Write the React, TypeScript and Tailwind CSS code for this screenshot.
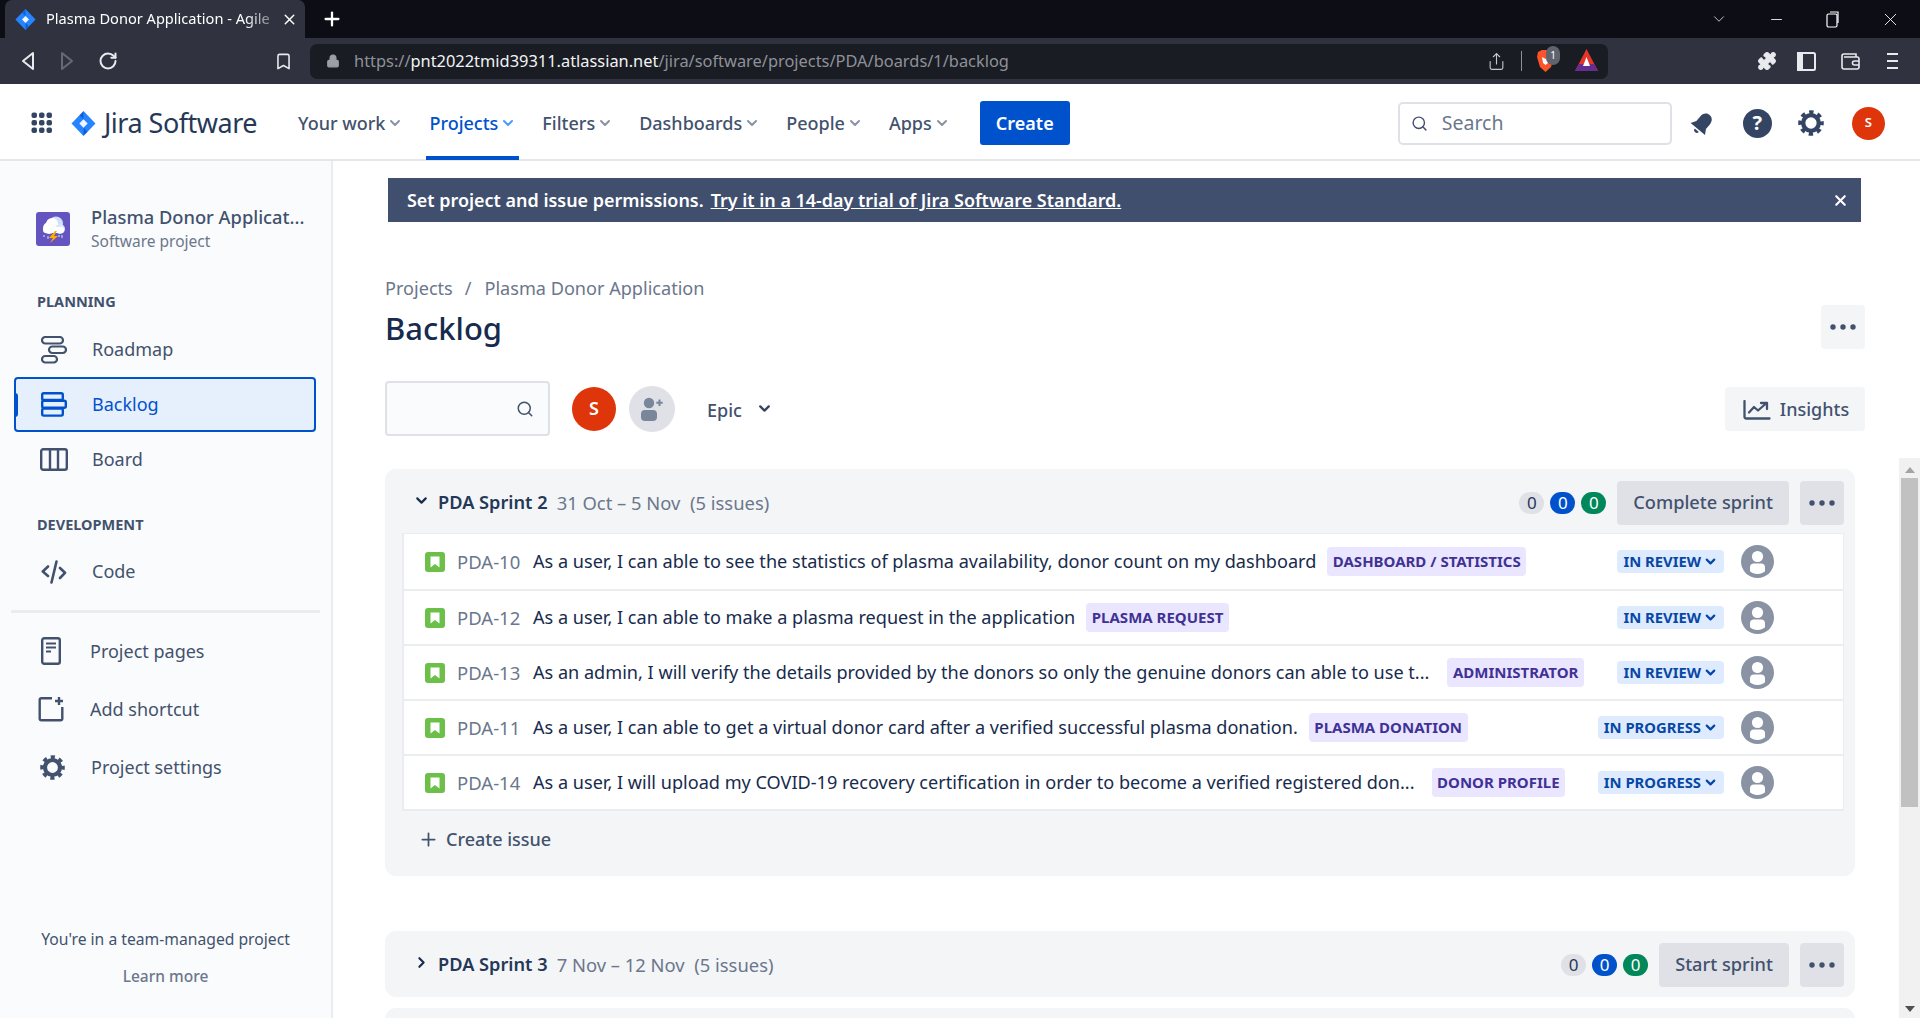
import { Puzzle, Search, ChevronDown, ChevronRight, Plus, X, Lock, RotateCw, Bookmark, Share, Minus } from "lucide-react";

const issues = [
  { key: "PDA-10", text: "As a user, I can able to see the statistics of plasma availability, donor count on my dashboard", label: "DASHBOARD / STATISTICS", status: "IN REVIEW", labelGap: "ml-[11px]" },
  { key: "PDA-12", text: "As a user, I can able to make a plasma request in the application", label: "PLASMA REQUEST", status: "IN REVIEW", labelGap: "ml-[11px]" },
  { key: "PDA-13", text: "As an admin, I will verify the details provided by the donors so only the genuine donors can able to use t...", label: "ADMINISTRATOR", status: "IN REVIEW", labelGap: "ml-[18px]" },
  { key: "PDA-11", text: "As a user, I can able to get a virtual donor card after a verified successful plasma donation.", label: "PLASMA DONATION", status: "IN PROGRESS", labelGap: "ml-[11px]" },
  { key: "PDA-14", text: "As a user, I will upload my COVID-19 recovery certification in order to become a verified registered don...", label: "DONOR PROFILE", status: "IN PROGRESS", labelGap: "ml-[17px]" },
];

const navItems = ["Your work", "Projects", "Filters", "Dashboards", "People", "Apps"];

function JiraMark({ size }: { size: number }) {
  return (
    <svg width={size} height={size} viewBox="0 0 24 24" className="shrink-0">
      <path d="M12 0 L23.5 12 L12 24 L0.5 12 Z" fill="#2684ff" />
      <path d="M12 8 L16 12 L12 16 L8 12 Z" fill="#f2f7ff" />
      <path d="M12 8 L8.2 4.2 L12 0.4 Z" fill="#0f5fd6" />
      <path d="M12 16 L15.8 19.8 L12 23.6 Z" fill="#0f5fd6" />
    </svg>
  );
}

function Gear({ size, color }: { size: number; color: string }) {
  return (
    <svg width={size} height={size} viewBox="0 0 24 24" className="shrink-0">
      <circle cx="12" cy="12" r="7.2" fill="none" stroke={color} strokeWidth="4" />
      <circle cx="12" cy="12" r="10" fill="none" stroke={color} strokeWidth="3.6" strokeDasharray="4 3.854" strokeDashoffset="2" />
    </svg>
  );
}

function Dots() {
  return (
    <svg width="26" height="6" viewBox="0 0 26 6">
      <circle cx="3" cy="3" r="2.7" fill="#42526e" />
      <circle cx="13" cy="3" r="2.7" fill="#42526e" />
      <circle cx="23" cy="3" r="2.7" fill="#42526e" />
    </svg>
  );
}

function Unassigned() {
  return (
    <svg width="33" height="33" viewBox="0 0 33 33" className="shrink-0">
      <defs>
        <clipPath id="unassigned-clip"><circle cx="16.5" cy="16.5" r="12.5" /></clipPath>
      </defs>
      <circle cx="16.5" cy="16.5" r="16.5" fill="#8993a4" />
      <circle cx="16.5" cy="11.5" r="5.6" fill="#fff" />
      <rect x="9" y="18.5" width="15" height="14" rx="4" fill="#fff" clipPath="url(#unassigned-clip)" />
    </svg>
  );
}

function StoryIcon() {
  return (
    <div className="w-5 h-5 rounded-[3px] bg-[#6cc04a] flex items-center justify-center shrink-0">
      <svg width="10" height="12" viewBox="0 0 10 12"><path d="M0.5 0.5H9.5V11.5L5 8L0.5 11.5Z" fill="#fff" /></svg>
    </div>
  );
}

function Counts() {
  return (
    <div className="flex items-center gap-[6px] text-[17px] leading-none">
      <span className="w-[25px] h-[22px] rounded-full bg-[#dfe1e6] text-[#253858] flex items-center justify-center">0</span>
      <span className="w-[25px] h-[22px] rounded-full bg-[#0052cc] text-white flex items-center justify-center">0</span>
      <span className="w-[25px] h-[22px] rounded-full bg-[#00875a] text-white flex items-center justify-center">0</span>
    </div>
  );
}

function SprintHeader({ open, name, dates, action }: { open: boolean; name: string; dates: string; action: string }) {
  return (
    <div className="h-[64px] shrink-0 flex items-center pt-[3px] pl-[28px] pr-[11px]">
      <div className="w-[25px] -mt-[5px] text-[#172b4d]">
        {open ? <ChevronDown size={17} strokeWidth={3} /> : <ChevronRight size={17} strokeWidth={3} />}
      </div>
      <span className="mt-[1px] text-[18.2px] font-semibold text-[#253858]">{name}</span>
      <span className="mt-[1px] ml-[9px] text-[18.4px] text-[#6b778c] whitespace-pre">{dates}  (5 issues)</span>
      <div className="ml-auto flex items-center">
        <Counts />
        <button className="ml-[11px] h-[44px] px-4 rounded-[4px] bg-[#dfe1e6] text-[#42526e] text-[18.2px] font-medium">{action}</button>
        <button className="ml-[11px] w-[44px] h-[44px] rounded-[4px] bg-[#dfe1e6] flex items-center justify-center"><Dots /></button>
      </div>
    </div>
  );
}

function Sidebar() {
  const itemText = "text-[18px] text-[#42526e]";
  return (
    <aside className="w-[333px] shrink-0 bg-[#fafbfc] border-r-2 border-[#ebecf0] flex flex-col relative">
      <div className="flex items-center pl-[36px] pt-[19px] h-[117px]">
        <svg width="34" height="34" viewBox="0 0 34 34" className="shrink-0">
          <rect width="34" height="34" rx="3" fill="#6554c0" />
          <circle cx="13" cy="16" r="6" fill="#fff" />
          <circle cx="20" cy="11.5" r="7" fill="#cfe0fb" />
          <circle cx="16" cy="12" r="6" fill="#fff" />
          <circle cx="24" cy="17" r="5" fill="#dbe7fc" />
          <rect x="7" y="15" width="21" height="6" rx="3" fill="#fff" />
          <path d="M8 23V25M12 24V27M23 23V25M26 23V26" stroke="#b3bcec" strokeWidth="1.4" />
          <path d="M19 19 L13 26 L17 26 L14 31 L22 24 L18 24 L21 19 Z" fill="#ffab00" />
        </svg>
        <div className="ml-[21px] flex flex-col">
          <span className="-mt-[1px] text-[18.3px] leading-[25px] font-medium text-[#42526e] whitespace-nowrap">Plasma Donor Applicat...</span>
          <span className="text-[15.5px] leading-[24px] text-[#6b778c]">Software project</span>
        </div>
      </div>
      <div className="pl-[37px] mt-[15px] h-[18px] flex items-center text-[14.5px] font-bold text-[#42526e]">PLANNING</div>
      <div className="mt-[11px] flex flex-col">
        <div className="ml-[14px] mr-[15px] h-[55px] flex items-center pl-[27px]">
          <svg width="26" height="28" viewBox="0 0 26 28" className="shrink-0">
            <rect x="1" y="1" width="21" height="6.5" rx="3.25" fill="none" stroke="#42526e" strokeWidth="2.2" />
            <rect x="8" y="10.5" width="17" height="6.5" rx="3.25" fill="none" stroke="#42526e" strokeWidth="2.2" />
            <rect x="1" y="20" width="15" height="6.5" rx="3.25" fill="none" stroke="#42526e" strokeWidth="2.2" />
          </svg>
          <span className={`ml-[25px] ${itemText}`}>Roadmap</span>
        </div>
        <div className="relative ml-[14px] mr-[15px] h-[55px] flex items-center pl-[25px] rounded-[4px] border-2 border-[#0052cc] bg-[#e6effc]">
          <div className="absolute -left-[2px] top-[14px] w-[4px] h-[24px] rounded-r-[3px] bg-[#0052cc]" />
          <svg width="26" height="25" viewBox="0 0 26 25" className="shrink-0">
            <rect x="1.2" y="1.2" width="20.6" height="6.8" rx="1.5" fill="none" stroke="#0052cc" strokeWidth="2.4" />
            <rect x="1.2" y="8.8" width="23.6" height="7" rx="1.5" fill="none" stroke="#0052cc" strokeWidth="2.4" />
            <rect x="1.2" y="16.6" width="20.6" height="7" rx="1.5" fill="none" stroke="#0052cc" strokeWidth="2.4" />
          </svg>
          <span className="ml-[25px] text-[18px] text-[#0052cc]">Backlog</span>
        </div>
        <div className="ml-[14px] mr-[15px] h-[55px] flex items-center pl-[26px]">
          <svg width="28" height="23" viewBox="0 0 28 23" className="shrink-0">
            <rect x="1.2" y="1.2" width="25.6" height="20.6" rx="2" fill="none" stroke="#42526e" strokeWidth="2.4" />
            <path d="M10 1.2V21.8M18 1.2V21.8" stroke="#42526e" strokeWidth="2.4" />
          </svg>
          <span className="ml-[24px] text-[18px] text-[#42526e]">Board</span>
        </div>
      </div>
      <div className="pl-[37px] mt-[29px] h-[18px] flex items-center text-[14.5px] font-bold text-[#42526e]">DEVELOPMENT</div>
      <div className="ml-[14px] mr-[15px] mt-[10px] h-[55px] flex items-center pl-[27px]">
        <svg width="26" height="24" viewBox="0 0 26 24" fill="none" stroke="#42526e" strokeWidth="2.6" strokeLinecap="round" strokeLinejoin="round" className="shrink-0">
          <path d="M7 6.5L1.8 11.5L7 16M19 8L24 12.8L19 18M15.5 1.5L10.5 22.5" />
        </svg>
        <span className={`ml-[25px] ${itemText}`}>Code</span>
      </div>
      <div className="mx-[11px] mt-[11px] h-[3px] bg-[#ebecf0]" />
      <div className="mt-[9px] flex flex-col">
        <div className="h-[58px] flex items-center pl-[41px]">
          <svg width="20" height="28" viewBox="0 0 20 28" fill="none" className="shrink-0">
            <rect x="1.2" y="1.2" width="17.6" height="25.6" rx="2" stroke="#42526e" strokeWidth="2.4" />
            <path d="M5 6.5H15M5 10.5H15M5 14.5H10" stroke="#42526e" strokeWidth="2.2" />
          </svg>
          <span className={`ml-[29px] ${itemText}`}>Project pages</span>
        </div>
        <div className="h-[58px] flex items-center pl-[38px]">
          <svg width="26" height="26" viewBox="0 0 26 26" fill="none" className="shrink-0">
            <path d="M14 2.2H3.2A1.5 1.5 0 0 0 1.7 3.7V22.8A1.5 1.5 0 0 0 3.2 24.3H22.8A1.5 1.5 0 0 0 24.3 22.8V11" stroke="#42526e" strokeWidth="2.4" />
            <path d="M21 1V9M17 5H25" stroke="#42526e" strokeWidth="2.4" />
          </svg>
          <span className={`ml-[26px] ${itemText}`}>Add shortcut</span>
        </div>
        <div className="h-[58px] flex items-center pl-[40px]">
          <Gear size={25} color="#42526e" />
          <span className={`ml-[26px] ${itemText}`}>Project settings</span>
        </div>
      </div>
      <div className="mt-auto pb-[30px] flex flex-col items-center">
        <span className="text-[15.7px] leading-[24px] text-[#42526e]">You're in a team-managed project</span>
        <span className="mt-[13px] text-[15.5px] leading-[24px] font-medium text-[#6b778c]">Learn more</span>
      </div>
    </aside>
  );
}

export default function App() {
  return (
    <div className="w-[1920px] h-[1018px] overflow-hidden flex flex-col bg-white font-['Noto_Sans','Liberation_Sans',sans-serif]">
      {/* browser tab strip */}
      <div className="h-[38px] shrink-0 bg-[#0c0d15] flex items-end pl-[5px] text-white">
        <div className="w-[300px] h-[38px] rounded-t-[7px] bg-[#30333f] flex items-center pl-[10px]">
          <JiraMark size={21} />
          <span className="ml-[10px] w-[226px] whitespace-nowrap text-[14.6px] [mask-image:linear-gradient(to_right,black_88%,rgba(0,0,0,0.35))]">Plasma Donor Application - Agile</span>
          <X size={17} className="ml-[9px]" />
        </div>
        <div className="ml-[16px] h-[38px] flex items-center"><Plus size={22} strokeWidth={2.5} /></div>
        <div className="ml-auto h-[38px] flex items-center gap-[40px] pr-[19px]">
          <ChevronDown size={18} strokeWidth={1} />
          <Minus size={17} strokeWidth={1.2} />
          <svg width="15" height="17" viewBox="0 0 15 17" fill="none" stroke="#fff" strokeWidth="1.2"><rect x="2" y="3" width="10" height="13" rx="1.5" /><path d="M5 1H13V12" /></svg>
          <X size={21} strokeWidth={1} />
        </div>
      </div>
      {/* browser toolbar */}
      <div className="h-[46px] shrink-0 bg-[#30333f] flex items-center text-[#e8eaed]">
        <svg width="14" height="20" viewBox="0 0 14 20" className="ml-[21px]"><path d="M12 2V18L2 10Z" fill="none" stroke="#e8eaed" strokeWidth="2" strokeLinejoin="round" /></svg>
        <svg width="14" height="20" viewBox="0 0 14 20" className="ml-[25px]"><path d="M2 2V18L12 10Z" fill="none" stroke="#676a75" strokeWidth="2" strokeLinejoin="round" /></svg>
        <RotateCw size={20} strokeWidth={2.4} className="ml-[24px]" />
        <Bookmark size={19} strokeWidth={2} className="ml-[156px]" />
        <div className="ml-[17px] w-[1298px] h-[35px] rounded-[7px] bg-[#1a1c23] flex items-center pl-[16px]">
          <Lock size={14} fill="#9aa0a6" stroke="#9aa0a6" />
          <span className="ml-[14px] text-[16.4px] whitespace-nowrap text-[#8e9199]">https://<span className="text-[#f1f3f4]">pnt2022tmid39311.atlassian.net</span>/jira/software/projects/PDA/boards/1/backlog</span>
          <div className="ml-auto flex items-center pr-[10px]">
            <Share size={19} strokeWidth={1.4} className="text-[#c4c7cc]" />
            <div className="ml-[15px] w-px h-[20px] bg-[#8e9199]" />
            <div className="relative ml-[14px]">
              <svg width="19" height="24" viewBox="0 0 19 24"><path d="M2 3L6 1H13L17 3L18 8L15 18L9.5 23L4 18L1 8Z" fill="#fb542b" /><path d="M6 8L9.5 10L13 8L12 14L9.5 16L7 14Z" fill="#fff" /></svg>
              <span className="absolute -top-[3px] left-[10px] w-[14px] h-[19px] rounded-full bg-[#5f636e] text-[10px] text-white flex items-center justify-center">1</span>
            </div>
            <svg width="23" height="24" viewBox="0 0 23 24" className="ml-[20px]"><path d="M11.5 0L23 22H0Z" fill="#e3352b" /><path d="M0 22L4 15H19L23 22Z" fill="#662d91" /><path d="M11.5 8L15 17H8Z" fill="#fff" /></svg>
          </div>
        </div>
        <Puzzle size={20} fill="#e8eaed" strokeWidth={1.5} className="ml-[149px]" />
        <svg width="19" height="19" viewBox="0 0 19 19" fill="none" stroke="#e8eaed" strokeWidth="2" className="ml-[20px]"><rect x="1" y="1" width="17" height="17" rx="1.5" /><rect x="1" y="1" width="4" height="17" fill="#e8eaed" /></svg>
        <svg width="19" height="17" viewBox="0 0 19 17" fill="none" stroke="#e8eaed" strokeWidth="1.6" className="ml-[25px]"><path d="M3 4H16.5A1.7 1.7 0 0 1 18 5.7V14A2 2 0 0 1 16 16H3A2 2 0 0 1 1 14V3A2 2 0 0 1 3 1H15V4" /><path d="M18 8H13.5A2 2 0 0 0 13.5 12H18" /></svg>
        <svg width="14" height="18" viewBox="0 0 14 18" fill="#e8eaed" className="ml-[25px]"><rect x="2" y="1" width="11" height="2" /><rect x="2" y="8" width="11" height="2" /><rect x="2" y="15" width="11" height="2" /></svg>
      </div>
      {/* jira nav */}
      <header className="h-[77px] shrink-0 bg-white border-b-2 border-[#e4e6ea] pt-[3px] flex items-center relative z-10">
        <svg width="23" height="23" viewBox="0 0 23 23" fill="#344563" className="ml-[30px] -mt-[1px]">
          {[1.5, 9, 16.5].flatMap((y) => [1.5, 9, 16.5].map((x) => <rect key={`${x}-${y}`} x={x} y={y} width="5.5" height="5.5" rx="2" />))}
        </svg>
        <div className="ml-[18px] flex items-center">
          <JiraMark size={25} />
          <span className="ml-[8px] text-[27px] tracking-[-0.5px] text-[#253858]">Jira Software</span>
        </div>
        <nav className="ml-[41px] h-full flex items-center gap-[26px]">
          {navItems.map((item) => (
            <div key={item} className={`relative h-full flex items-center text-[18px] font-medium ${item === "Projects" ? "text-[#0052cc]" : "text-[#42526e]"}`}>
              {item}
              <ChevronDown size={16} strokeWidth={3} className={`ml-[2px] ${item === "Projects" ? "text-[#4c9aff]" : "text-[#8993a4]"}`} />
              {item === "Projects" && <div className="absolute -left-[3px] -right-[3px] bottom-[-1px] h-[4px] bg-[#0052cc]" />}
            </div>
          ))}
        </nav>
        <button className="ml-[30px] w-[90px] h-[44px] rounded-[3px] bg-[#0052cc] text-white text-[18px] font-semibold">Create</button>
        <div className="ml-[328px] w-[274px] h-[43px] rounded-[5px] border-2 border-[#dfe1e6] flex items-center pl-[11px]">
          <Search size={17} strokeWidth={2} className="text-[#42526e]" />
          <span className="ml-[14px] text-[19.5px] text-[#6b778c]">Search</span>
        </div>
        <svg width="25" height="25" viewBox="0 0 24 24" className="ml-[18px]" fill="#344563">
          <g transform="rotate(40 12 12)"><path d="M12 1.5C7.8 1.5 6 4.8 6 8.5V14L3 19H21L18 14V8.5C18 4.8 16.2 1.5 12 1.5Z" /><path d="M9.5 20.5H14.5A2.5 2.5 0 0 1 9.5 20.5Z" /></g>
        </svg>
        <div className="ml-[28px] w-[29px] h-[29px] rounded-full bg-[#344563] text-white text-[20px] font-bold leading-none flex items-center justify-center">?</div>
        <div className="ml-[26px]"><Gear size={26} color="#344563" /></div>
        <div className="ml-[28px] w-[33px] h-[33px] rounded-full bg-[#de350b] text-white text-[13px] font-semibold flex items-center justify-center">S</div>
      </header>
      <div className="flex-1 min-h-0 flex">
        <Sidebar />
        <main className="flex-1 min-w-0 flex flex-col">
          <div className="ml-[55px] mr-[59px] mt-[17px] h-[44px] shrink-0 bg-[#3f4f6d] flex items-center pl-[19px] pr-[12px] pt-[1px] text-white text-[17.95px] font-semibold">
            <span>Set project and issue permissions.</span>
            <span className="ml-[7px] underline">Try it in a 14-day trial of Jira Software Standard.</span>
            <X size={17} strokeWidth={3} className="ml-auto" />
          </div>
          <div className="pl-[52px] pr-[55px] shrink-0">
            <div className="mt-[45px] flex justify-between">
              <div>
                <div className="h-[44px] flex items-center text-[18.1px] text-[#6b778c] whitespace-nowrap">
                  <span>Projects</span>
                  <span className="ml-[12px]">/</span>
                  <span className="ml-[13px]">Plasma Donor Application</span>
                </div>
                <h1 className="mt-[-5px] text-[31px] leading-[44px] font-medium text-[#172b4d]">Backlog</h1>
              </div>
              <button className="mt-[38px] w-[44px] h-[44px] rounded-[4px] bg-[#f4f5f7] flex items-center justify-center"><Dots /></button>
            </div>
            <div className="mt-[31px] flex items-center">
              <div className="w-[165px] h-[55px] rounded-[4px] border-2 border-[#dfe1e6] bg-[#fafbfc] flex items-center justify-end pr-[14px]">
                <Search size={18} strokeWidth={2} className="text-[#42526e]" />
              </div>
              <div className="ml-[22px] w-[44px] h-[44px] rounded-full bg-[#de350b] text-white text-[18px] font-semibold flex items-center justify-center">S</div>
              <div className="ml-[13px] w-[46px] h-[46px] rounded-full bg-[#dfe1e6] flex items-center justify-center">
                <svg width="26" height="26" viewBox="0 0 26 26" fill="#7a869a">
                  <circle cx="10" cy="7" r="5.2" />
                  <rect x="2" y="14" width="16" height="11" rx="4" />
                  <path d="M20.5 3.5V10M17.3 6.8H23.7" stroke="#7a869a" strokeWidth="2" fill="none" />
                </svg>
              </div>
              <span className="ml-[32px] mt-[3px] text-[18px] font-medium text-[#42526e]">Epic</span>
              <ChevronDown size={17} strokeWidth={3.2} className="ml-[14px] text-[#344563]" />
              <button className="ml-auto w-[140px] h-[44px] pt-[2px] rounded-[4px] bg-[#f4f5f7] flex items-center justify-center text-[18px] font-medium text-[#42526e]">
                <svg width="28" height="20" viewBox="0 0 28 20" fill="none" stroke="#42526e" strokeWidth="2.3" strokeLinecap="round" strokeLinejoin="round" className="mr-[9px] ml-[2px]">
                  <path d="M1.5 1V16.5A2 2 0 0 0 3.5 18.5H26.5" />
                  <path d="M6 12.5L11 7L15 10.5L23 3.5M18 3H24V9" />
                </svg>
                Insights
              </button>
            </div>
          </div>
          <div className="flex-1 min-h-0 flex mt-[22px] overflow-hidden">
            <div className="pl-[52px] w-[1523px] shrink-0 pt-[11px] flex flex-col">
              <section className="w-[1470px] h-[407px] shrink-0 rounded-[11px] bg-[#f4f5f7] flex flex-col">
                <SprintHeader open name="PDA Sprint 2" dates="31 Oct – 5 Nov" action="Complete sprint" />
                <div className="ml-[17px] mr-[11px] border-2 border-t border-r border-[#ebecf0] bg-white">
                  {issues.map((issue, i) => (
                    <div key={issue.key} className={`h-[55px] flex items-center pl-[21px] whitespace-nowrap ${i > 0 ? "border-t-2 border-[#ebecf0]" : ""}`}>
                      <StoryIcon />
                      <span className="ml-[12px] mt-[1px] w-[76px] text-[18.5px] text-[#6b778c]">{issue.key}</span>
                      <span className="mt-[1px] text-[18.1px] text-[#172b4d]">{issue.text}</span>
                      <span className={`${issue.labelGap} h-[29px] px-[5.5px] rounded-[4px] bg-[#eae6ff] text-[#403294] text-[15px] font-bold flex items-center`}>{issue.label}</span>
                      <span className="ml-auto h-[23px] pl-[6px] pr-[6px] rounded-[4px] bg-[#deebff] text-[#0747a6] text-[14.8px] font-bold flex items-center">
                        {issue.status}
                        <ChevronDown size={15} strokeWidth={3.5} className="ml-[2px]" />
                      </span>
                      <div className="ml-[17px] mr-[69px]"><Unassigned /></div>
                    </div>
                  ))}
                </div>
                <div className="h-[57px] flex items-center pl-[33px] text-[18px] font-medium text-[#42526e]">
                  <Plus size={21} strokeWidth={2} />
                  <span className="ml-[7px]">Create issue</span>
                </div>
              </section>
              <section className="mt-[55px] w-[1470px] h-[66px] shrink-0 rounded-[11px] bg-[#f4f5f7]">
                <SprintHeader open={false} name="PDA Sprint 3" dates="7 Nov – 12 Nov" action="Start sprint" />
              </section>
              <section className="mt-[11px] w-[1470px] h-[66px] shrink-0 rounded-[11px] bg-[#f4f5f7]" />
            </div>
            <div className="ml-auto w-[21px] shrink-0 bg-[#f1f1f1] flex flex-col items-center">
              <svg width="10" height="6" viewBox="0 0 10 6" className="mt-[9px]"><path d="M0 6L5 0L10 6Z" fill="#a3a3a3" /></svg>
              <div className="mt-[5px] w-[17px] h-[329px] bg-[#c1c1c1]" />
              <svg width="10" height="6" viewBox="0 0 10 6" className="mt-auto mb-[6px]"><path d="M0 0L5 6L10 0Z" fill="#505050" /></svg>
            </div>
          </div>
        </main>
      </div>
    </div>
  );
}
